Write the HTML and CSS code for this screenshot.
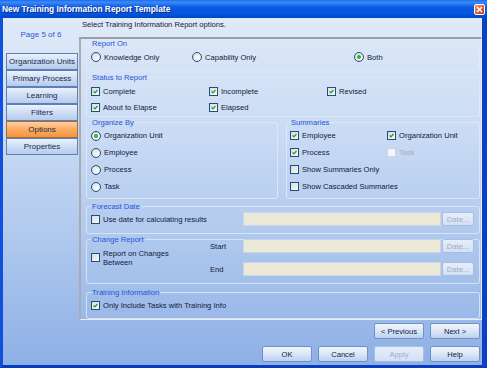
FILE: index.html
```html
<!DOCTYPE html>
<html lang="en">
<head>
    <meta charset="UTF-8" />
    <title>New Training Information Report Template</title>
    <link rel="stylesheet" href="styles.css">
</head>
<body>
<div class="window">
    <div class="titlebar">
        <span class="title">New Training Information Report Template</span>
        <span class="close">
            <svg width="7" height="7" viewBox="0 0 7 7"><path d="M1 1L6 6M6 1L1 6" stroke="#fff" stroke-width="1.6"/></svg>
        </span>
    </div>
    <div class="client">
        <aside class="sidebar">
            <p class="page-no">Page 5 of 6</p>
            <nav class="steps">
                <a href="#">Organization Units</a>
                <a href="#">Primary Process</a>
                <a href="#">Learning</a>
                <a href="#">Filters</a>
                <a href="#" class="current">Options</a>
                <a href="#">Properties</a>
            </nav>
        </aside>
        <section class="main">
            <p class="intro">Select Training Information Report options.</p>
            <div class="panel">
                <fieldset class="group report-on">
                    <legend>Report On</legend>
                    <div class="opts">
                        <label class="opt"><span class="rb"></span>Knowledge Only</label>
                        <label class="opt"><span class="rb"></span>Capability Only</label>
                        <label class="opt"><span class="rb on"></span>Both</label>
                    </div>
                </fieldset>

                <fieldset class="group status">
                    <legend>Status to Report</legend>
                    <div class="opts">
                        <label class="opt"><span class="cb on"><svg viewBox="0 0 9 9"><path d="M2 4.3l1.8 1.9L7 2.6"/></svg></span>Complete</label>
                        <label class="opt"><span class="cb on"><svg viewBox="0 0 9 9"><path d="M2 4.3l1.8 1.9L7 2.6"/></svg></span>Incomplete</label>
                        <label class="opt"><span class="cb on"><svg viewBox="0 0 9 9"><path d="M2 4.3l1.8 1.9L7 2.6"/></svg></span>Revised</label>
                        <label class="opt"><span class="cb on"><svg viewBox="0 0 9 9"><path d="M2 4.3l1.8 1.9L7 2.6"/></svg></span>About to Elapse</label>
                        <label class="opt"><span class="cb on"><svg viewBox="0 0 9 9"><path d="M2 4.3l1.8 1.9L7 2.6"/></svg></span>Elapsed</label>
                    </div>
                </fieldset>

                <div class="pair">
                    <fieldset class="group organize">
                        <legend>Organize By</legend>
                        <div class="opts">
                            <label class="opt"><span class="rb on"></span>Organization Unit</label>
                            <label class="opt"><span class="rb"></span>Employee</label>
                            <label class="opt"><span class="rb"></span>Process</label>
                            <label class="opt"><span class="rb"></span>Task</label>
                        </div>
                    </fieldset>
                    <fieldset class="group summaries">
                        <legend>Summaries</legend>
                        <div class="opts">
                            <label class="opt"><span class="cb on"><svg viewBox="0 0 9 9"><path d="M2 4.3l1.8 1.9L7 2.6"/></svg></span>Employee</label>
                            <label class="opt"><span class="cb on"><svg viewBox="0 0 9 9"><path d="M2 4.3l1.8 1.9L7 2.6"/></svg></span>Organization Unit</label>
                            <label class="opt"><span class="cb on"><svg viewBox="0 0 9 9"><path d="M2 4.3l1.8 1.9L7 2.6"/></svg></span>Process</label>
                            <label class="opt disabled"><span class="cb"></span>Task</label>
                            <label class="opt wide"><span class="cb"></span>Show Summaries Only</label>
                            <label class="opt wide"><span class="cb"></span>Show Cascaded Summaries</label>
                        </div>
                    </fieldset>
                </div>

                <fieldset class="group forecast">
                    <legend>Forecast Date</legend>
                    <div class="dates">
                        <label class="opt span2"><span class="cb"></span>Use date for calculating results</label>
                        <span class="field"></span>
                        <button class="btn small" disabled>Date...</button>
                    </div>
                </fieldset>

                <fieldset class="group change">
                    <legend>Change Report</legend>
                    <div class="dates">
                        <label class="opt tall"><span class="cb"></span>Report on Changes<br>Between</label>
                        <span class="lbl">Start</span>
                        <span class="field"></span>
                        <button class="btn small" disabled>Date...</button>
                        <span class="lbl">End</span>
                        <span class="field"></span>
                        <button class="btn small" disabled>Date...</button>
                    </div>
                </fieldset>

                <fieldset class="group training">
                    <legend>Training Information</legend>
                    <label class="opt"><span class="cb on"><svg viewBox="0 0 9 9"><path d="M2 4.3l1.8 1.9L7 2.6"/></svg></span>Only Include Tasks with Training Info</label>
                </fieldset>
            </div>

            <div class="btn-row nav-row">
                <button class="btn">&lt; Previous</button>
                <button class="btn">Next &gt;</button>
            </div>
            <div class="btn-row">
                <button class="btn">OK</button>
                <button class="btn">Cancel</button>
                <button class="btn" disabled>Apply</button>
                <button class="btn">Help</button>
            </div>
        </section>
    </div>
</div>
</body>
</html>
```

FILE: styles.css
```css
body { margin: 0; font-family: "Liberation Sans", Arial, sans-serif; font-size: 7.6px; color: #10203a; }
p { margin: 0; }

.window { width: 487px; height: 368px; box-sizing: border-box; display: flex; flex-direction: column; background: #0846d0; border-left: 3px solid #1050dc; border-right: 5px solid #0a40c8; border-bottom: 3px solid #0a3cc0; }
.titlebar { height: 18px; margin: 0 -5px 0 -3px; padding: 0 2px 0 2px; display: flex; align-items: center; justify-content: space-between; background: linear-gradient(#1a6cf0, #3d8af6 12%, #0a5ae4 40%, #0555e0 75%, #0046c8); }
.title { color: #fff; font-weight: bold; font-size: 8.4px; text-shadow: 1px 1px 0 #0a2a80; }
.close { width: 11px; height: 11px; margin-top: 1px; box-sizing: border-box; border: 1px solid #fff; border-radius: 2px; display: flex; align-items: center; justify-content: center; background: linear-gradient(135deg, #f09a6e, #e0502a 60%, #c8401a); }

.client { flex: 1; display: flex; background: linear-gradient(#e0eaf8, #c8daf4 35%, #a9c4ec 70%, #8eb0e6); }

.sidebar { width: 76px; flex: none; }
.page-no { margin-top: 12px; line-height: 9px; text-align: center; color: #2a5ad6; font-size: 8px; }
.steps { margin: 14px 1px 0 3px; display: flex; flex-direction: column; }
.steps a { height: 17px; box-sizing: border-box; display: flex; align-items: center; justify-content: center; border: 1px solid #5f7fb8; color: #1a2a4c; font-size: 8px; text-decoration: none; background: linear-gradient(#eaf1fc, #c9daf3 60%, #b6cbec); }
.steps a.current { border-color: #a56a3a; background: linear-gradient(#ffd0a0, #fbaa62 50%, #f29640); }

.main { flex: 1; display: flex; flex-direction: column; }
.intro { height: 19px; box-sizing: border-box; padding: 2px 0 0 3px; line-height: 9px; }

.panel { height: 283px; box-sizing: border-box; padding: 0 1px 0 5px; border-top: 2px solid #999da4; border-left: 2px solid #a8acb2; border-right: 1px solid #e6eef9; border-bottom: 1px solid #e6eef9; }

.group { margin: 0; min-width: 0; box-sizing: border-box; padding: 0 4px; border: 1px solid rgba(226, 234, 247, 0.8); border-radius: 3px; }
.group legend { padding: 0 1px; line-height: 9px; color: #1f55d8; }

.opt { display: flex; align-items: center; gap: 3px; height: 16px; white-space: nowrap; }
.opt.disabled { color: #a4adbb; }

.cb { width: 9px; height: 9px; flex: none; box-sizing: border-box; border: 1px solid #1d4f86; background: linear-gradient(135deg, #dcdcd4, #fafaf6); display: flex; }
.cb svg { width: 7px; height: 7px; }
.cb path { fill: none; stroke: #22a02a; stroke-width: 1.7; }
.opt.disabled .cb { border-color: #cdd3dc; background: #f4f6f9; }
.rb { width: 10px; height: 10px; flex: none; box-sizing: border-box; border: 1px solid #1d4f86; border-radius: 50%; background: radial-gradient(circle at 65% 65%, #fff, #d8d8d0); display: flex; align-items: center; justify-content: center; }
.rb.on::after { content: ""; width: 4px; height: 4px; border-radius: 50%; background: #2cb42c; }

.report-on { height: 32px; padding-top: 1px; }
.report-on .opts { display: grid; grid-template-columns: 101px 162px auto; }
.status { height: 44px; margin-top: 2px; padding-top: 1px; }
.status .opts { display: grid; grid-template-columns: 118px 118px auto; }

.pair { display: grid; grid-template-columns: 192px 1fr; gap: 8px; margin-top: 1px; }
.organize, .summaries { height: 81px; }
.organize .opt, .summaries .opt { height: 17px; }
.summaries { padding-left: 3px; }
.summaries .opts { display: grid; grid-template-columns: 97px auto; }
.summaries .wide { grid-column: 1 / 3; }

.dates { display: grid; grid-template-columns: 119px 33px 198px 32px; column-gap: 0; }
.dates .btn { margin-left: 1px; }
.field { height: 14px; box-sizing: border-box; background: #ece9d8; border: 1px solid #c9d5e8; }
.lbl { display: flex; align-items: center; }
.span2 { grid-column: 1 / 3; height: 14px; }
.forecast { height: 32px; margin-top: 3px; padding-top: 1px; }
.change { height: 49px; margin-top: 1px; }
.change .dates { margin-top: -5px; row-gap: 9px; grid-template-rows: 14px 14px; }
.tall { grid-row: 1 / 3; height: auto; line-height: 9px; align-items: center; }
.training { height: 31px; margin-top: 4px; }

.btn { width: 50px; height: 16px; padding: 0; box-sizing: border-box; font: inherit; color: #10203a; border: 1px solid #7390c4; border-radius: 2px; background: linear-gradient(#f0f5fd, #d8e5f7 55%, #bcd0ef); }
.btn:disabled { color: #9eadc6; border-color: #a9bde0; background: linear-gradient(#e6eefa, #d3e0f4); }
.btn.small { width: 32px; height: 14px; }
.btn-row { display: flex; justify-content: flex-end; gap: 6px; padding-right: 2px; margin-top: 7px; }
.nav-row { margin-top: 3px; }
```
